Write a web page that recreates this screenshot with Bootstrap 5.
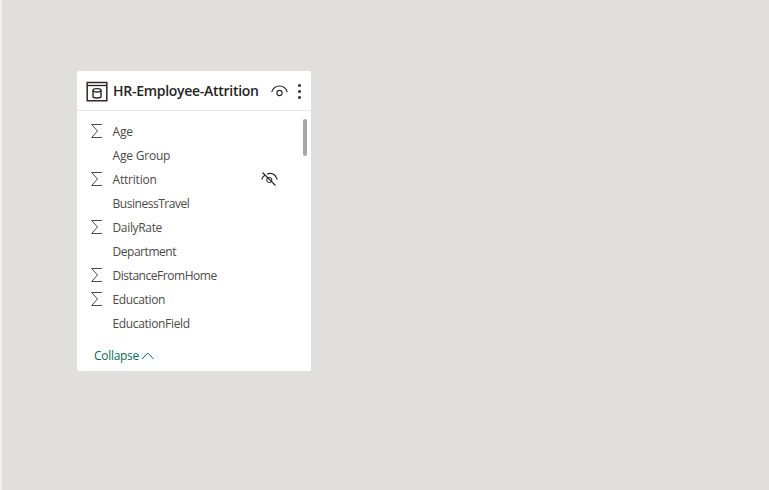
<!DOCTYPE html>
<html lang="en">
<head>
<meta charset="utf-8">
<title>Model view</title>
<meta name="viewport" content="width=device-width, initial-scale=1">
<link href="https://cdn.jsdelivr.net/npm/bootstrap@5.3.0/dist/css/bootstrap.min.css" rel="stylesheet">
<style>
body{background:#e0dfdd;font-family:"Open Sans","Noto Sans",sans-serif;font-size:12px;color:#4b4a48;border-left:2px solid #f3f2f1;padding:71px 0 0 75px}
.model-table{width:234px;height:300px;border-radius:2px}
.table-head{height:40px;border-bottom:1px solid #e9e8e7;padding:1px 6px 0 9px;color:#252423}
.table-title{font-size:14px;font-weight:600;letter-spacing:-.28px;width:158px;margin-left:5px;line-height:20px}
.field-area{height:213px;padding:8px 4px 0 13px}
.field{height:24px;line-height:24px}
.field-icon{width:13px;margin-right:9.5px}
.field-name{width:148px;letter-spacing:-.2px;padding-top:1px}
.tight{letter-spacing:-.34px}
.tighter{letter-spacing:-.46px}
.hidden-mark{color:#252423}
.thumb{width:4px;height:37px;border-radius:2px;background:#a6a6a6}
.collapse-link{color:#0c695d;height:24px;margin:20px 0 0 17px;letter-spacing:-.3px;line-height:24px}
.chevron{margin-left:2px}
svg{fill:none;stroke:currentColor;display:block;flex:none}
</style>
<script src="https://cdn.jsdelivr.net/npm/bootstrap@5.3.0/dist/js/bootstrap.bundle.min.js"></script>
</head>
<body class="vh-100 overflow-hidden">
<svg width="0" height="0" class="position-absolute"><defs>
<symbol id="sigma" viewBox="0 0 13 16"><path d="M11.8 1.500H1.700L7.500 8 1.700 14.500H11.800" stroke-width="1"/></symbol>
</defs></svg>
<main class="model-table bg-white d-flex flex-column">
<header class="table-head d-flex align-items-center">
<svg width="22" height="22" viewBox="0 0 22 22"><path d="M1.200 2.500h19.600v18.300H1.200z" stroke="#3a2522" stroke-width="1.500"/><path d="M1 5.500h20" stroke-width="1.300"/><path d="M7 10.500v6c0 2 8 2 8 0v-6" stroke-width="1.400"/><ellipse cx="11" cy="10.300" rx="4" ry="1.700" stroke-width="1.400"/></svg>
<div class="table-title text-nowrap">HR-Employee-Attrition</div>
<svg width="17" height="14" viewBox="0 0 17 14"><path d="M.7 8C2 4.200 5 2 8.500 2S15 4.200 16.300 8" stroke-width="1.100"/><circle cx="8.500" cy="9" r="2.600" stroke-width="1.100"/></svg>
<svg width="3" height="16" viewBox="0 0 3 16" class="ms-auto me-1"><path d="M.2 2.500h2.600M.2 8.500h2.600M.2 14.500h2.600" stroke-width="2.600"/></svg>
</header>
<section class="field-area d-flex">
<div class="flex-grow-1">
<div class="field d-flex align-items-center"><div class="field-icon"><svg width="13" height="16"><use href="#sigma"/></svg></div><span class="field-name">Age</span></div>
<div class="field d-flex align-items-center"><div class="field-icon"></div><span class="field-name">Age Group</span></div>
<div class="field d-flex align-items-center"><div class="field-icon"><svg width="13" height="16"><use href="#sigma"/></svg></div><span class="field-name">Attrition</span><svg class="hidden-mark" width="17" height="15" viewBox="0 0 17 15"><path d="M.7 7.500C1.400 5.500 2.400 4 4 3M6 2C10.500.5 14.500 2.500 16.300 7.500M1.500.5l13 13" stroke-width="1.100"/><circle cx="8.300" cy="8" r="2.600" stroke-width="1"/></svg></div>
<div class="field d-flex align-items-center"><div class="field-icon"></div><span class="field-name tighter">BusinessTravel</span></div>
<div class="field d-flex align-items-center"><div class="field-icon"><svg width="13" height="16"><use href="#sigma"/></svg></div><span class="field-name tight">DailyRate</span></div>
<div class="field d-flex align-items-center"><div class="field-icon"></div><span class="field-name tighter">Department</span></div>
<div class="field d-flex align-items-center"><div class="field-icon"><svg width="13" height="16"><use href="#sigma"/></svg></div><span class="field-name tighter">DistanceFromHome</span></div>
<div class="field d-flex align-items-center"><div class="field-icon"><svg width="13" height="16"><use href="#sigma"/></svg></div><span class="field-name tight">Education</span></div>
<div class="field d-flex align-items-center"><div class="field-icon"></div><span class="field-name tight">EducationField</span></div>
</div>
<div class="thumb"></div>
</section>
<a class="collapse-link d-flex align-items-center text-decoration-none" href="#"><span>Collapse</span><svg class="chevron" width="13" height="8" viewBox="0 0 13 8"><path d="M1 7l5.800-6L12.500 7" stroke-width="1"/></svg></a>
</main>
</body>
</html>
